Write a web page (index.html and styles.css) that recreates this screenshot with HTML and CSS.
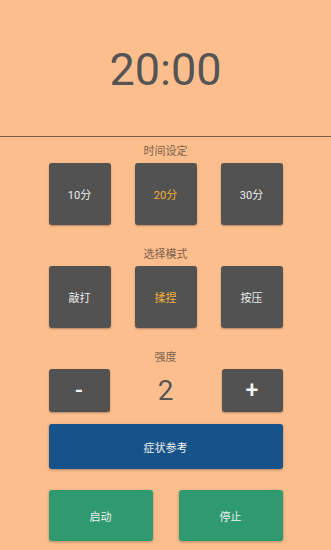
FILE: index.html
```html
<!DOCTYPE html>
<html lang="zh">
<head>
<meta charset="utf-8">
<title>Timer</title>
<link rel="stylesheet" href="styles.css">
</head>
<body>
<div class="clock">20:00</div>
<div class="divider"></div>
<main class="panel">
  <div class="label">时间设定</div>
  <div class="row">
    <button class="tile">10分</button>
    <button class="tile active">20分</button>
    <button class="tile">30分</button>
  </div>
  <div class="label">选择模式</div>
  <div class="row">
    <button class="tile">敲打</button>
    <button class="tile active">揉捏</button>
    <button class="tile">按压</button>
  </div>
  <div class="label">强度</div>
  <div class="row strength">
    <button class="tile small sign">-</button>
    <div class="level">2</div>
    <button class="tile small sign">+</button>
  </div>
  <button class="wide">症状参考</button>
  <div class="actions">
    <button class="go">启动</button>
    <button class="go">停止</button>
  </div>
</main>
</body>
</html>
```

FILE: styles.css
```css
html, body {
  margin: 0;
  padding: 0;
}
body {
  background: #fdbe8d;
  font-family: Roboto, "Noto Sans CJK SC", sans-serif;
  width: 331px;
  height: 550px;
  overflow: hidden;
}
.clock {
  height: 136px;
  display: flex;
  align-items: center;
  justify-content: center;
  font-size: 45px;
  color: #545454;
  padding-top: 2px;
  box-sizing: border-box;
}
.divider {
  height: 1px;
  background: #7a5f4f;
}
.panel {
  width: 234px;
  margin: 0 auto;
  display: flex;
  flex-direction: column;
}
.label {
  font-size: 11px;
  line-height: 16px;
  height: 16px;
  color: #7d6250;
  text-align: center;
  margin-top: 7px;
  margin-bottom: 3px;
}
.row + .label {
  margin-top: 22px;
}
.row {
  display: flex;
  justify-content: space-between;
  align-items: center;
}
button {
  border: none;
  font-family: inherit;
  padding: 0;
  cursor: pointer;
}
.tile {
  width: 62px;
  height: 62px;
  background: #525252;
  color: #ececec;
  font-size: 11px;
  border-radius: 3px;
  box-shadow: 0 1px 2px rgba(0, 0, 0, 0.3);
}
.tile.active {
  color: #f2b035;
}
.tile.small {
  height: 43px;
  width: 61px;
}
.sign {
  font-size: 23px;
  font-weight: 500;
  color: #f4f4f4;
}
.level {
  font-size: 28px;
  color: #555;
  text-align: center;
}
.wide {
  margin-top: 12px;
  height: 45px;
  width: 100%;
  background: #165388;
  color: #f0f0f0;
  font-size: 11px;
  border-radius: 3px;
  box-shadow: 0 1px 3px rgba(0, 0, 0, 0.3);
}
.actions {
  margin-top: 21px;
  display: flex;
  justify-content: space-between;
}
.go {
  width: 104px;
  height: 51px;
  background: #2f9a70;
  color: #f0f0f0;
  font-size: 11px;
  border-radius: 3px;
  box-shadow: 0 1px 3px rgba(0, 0, 0, 0.3);
}
```
